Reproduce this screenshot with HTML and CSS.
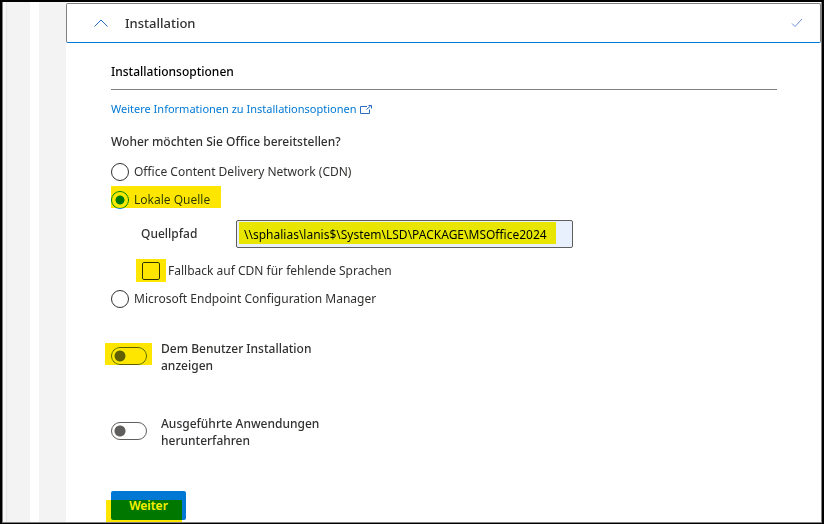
FILE: index.html
```html
<!DOCTYPE html>
<html lang="de">
<head>
    <meta charset="UTF-8">
    <meta name="viewport" content="width=device-width, initial-scale=1.0">
    <title>Installation</title>
    <link rel="stylesheet" href="styles.css">
</head>
<body>
    <div class="frame">
        <div class="rail"></div>
        <div class="gutter"></div>
        <main class="panel">
            <!-- Kopfzeile des aufklappbaren Abschnitts -->
            <button type="button" class="panel-header" aria-expanded="true">
                <svg class="chevron" width="16" height="10" viewBox="0 0 16 10"><path d="M1.5 8.5 8 2l6.500 6.500" /></svg>
                <span class="panel-title">Installation</span>
                <svg class="check" width="12" height="10" viewBox="0 0 12 10"><path d="M1 5.500 4 8.500 11 1" /></svg>
            </button>

            <form class="content">
                <h2>Installationsoptionen</h2>
                <a class="more" href="#">Weitere Informationen zu Installationsoptionen<svg width="12" height="9" viewBox="0 0 12 9"><path d="M7 1.500H.5v7h9V4.500M6.500 4.500 11 .5M8.500.5h3v3" /></svg></a>

                <h3>Woher möchten Sie Office bereitstellen?</h3>
                <label class="option">
                    <input type="radio" name="quelle" value="cdn">
                    Office Content Delivery Network (CDN)
                </label>
                <label class="option mark mark-option">
                    <input type="radio" name="quelle" value="lokal" checked>
                    Lokale Quelle
                </label>

                <div class="path">
                    <label for="pfad">Quellpfad</label>
                    <div class="path-field mark mark-path">
                        <input type="text" id="pfad" value="\\sphalias\lanis$\System\LSD\PACKAGE\MSOffice2024">
                    </div>
                </div>
                <label class="option fallback mark mark-check">
                    <input type="checkbox" name="fallback">
                    Fallback auf CDN für fehlende Sprachen
                </label>

                <label class="option">
                    <input type="radio" name="quelle" value="mecm">
                    Microsoft Endpoint Configuration Manager
                </label>

                <!-- Schalter -->
                <label class="toggle mark mark-toggle">
                    <input type="checkbox" role="switch">
                    <span>Dem Benutzer Installation anzeigen</span>
                </label>
                <label class="toggle">
                    <input type="checkbox" role="switch">
                    <span>Ausgeführte Anwendungen herunterfahren</span>
                </label>

                <div class="actions mark mark-next">
                    <button type="button" class="next">Weiter</button>
                </div>
            </form>
        </main>
    </div>
</body>
</html>
```

FILE: styles.css
```css
* { box-sizing: border-box; }

body {
    display: grid;
    min-height: 100vh;
    margin: 0;
    border: 2px solid #000;
    border-bottom-width: 1px;
    font: 12px/20px "Segoe UI", "Noto Sans", "Open Sans", sans-serif;
    color: #323130;
    background: #fff;
}

input, button { font: inherit; color: inherit; margin: 0; }

/* Rahmen und graue Spalten links */
.frame {
    display: grid;
    grid-template-columns: 27px 9px 27px 1fr;
    border: 1px solid #808080;
    border-top: 0;
}
.rail, .gutter { background: #f3f3f3; }
.rail { box-shadow: inset 3px 0 #f8f8f8, inset 4px 0 #e6e6e6; }
.gutter { grid-column: 3; }
.panel { padding-top: 1px; }

/* Kopfzeile */
.panel-header {
    display: flex;
    align-items: center;
    width: 100%;
    height: 40px;
    padding: 0 17px 0 26px;
    border: 1px solid #808080;
    border-bottom-color: #0078d4;
    border-radius: 2px;
    background: #fff;
    text-align: left;
}
.panel-title { flex: 1; margin-left: 16px; font-size: 13px; font-weight: 500; }
svg { fill: none; stroke: #2b6cc4; }
.check { stroke: #6f8fe0; }

/* Inhalt */
.content { padding: 19px 44px 0 45px; }

h2, h3 { margin: 0; font-size: 12px; font-weight: 500; }
h2 { padding-bottom: 7px; border-bottom: 1px solid #808080; color: #000; }
h3 { margin: 13px 0 6px; }

.more { display: block; margin-top: 9px; font-size: 11px; color: #0078d4; text-decoration: none; }
.more svg { margin-left: 3px; vertical-align: -1px; }

.option { display: flex; align-items: center; gap: 5px; width: fit-content; height: 28px; }
.fallback { margin-left: 31px; gap: 8px; }

/* Auswahlfelder */
.option input {
    appearance: none;
    width: 18px;
    height: 18px;
    border: 1px solid #323130;
    background: #fff;
}
.option input[type="radio"] { border-radius: 50%; }
.option input[type="checkbox"] { border-radius: 2px; }
.option input[type="radio"]:checked {
    border-color: #0078d4;
    background: radial-gradient(circle, #0078d4 4px, #fff 5px);
}

.path { display: flex; align-items: center; margin: 6px 0 9px 30px; }
.path label { width: 95px; font-weight: 500; }
.path-field { flex: 0 1 337px; }
.path-field input {
    display: block;
    width: 100%;
    height: 28px;
    padding: 0 7px;
    border: 1px solid #605e5c;
    border-radius: 2px;
    background: #e8f0fe;
    color: #000;
}

/* Schalter */
.toggle { display: flex; gap: 14px; width: 230px; margin-top: 27px; line-height: 17px; font-weight: 500; }
.toggle + .toggle { margin-top: 41px; }
.toggle input {
    appearance: none;
    flex: none;
    width: 36px;
    height: 18px;
    margin-top: 7px;
    border: 1px solid #605e5c;
    border-radius: 9px;
    background: radial-gradient(circle at 8px 8px, #605e5c 5px, #fff 6px);
}

.actions { width: fit-content; margin-top: 42px; }
.next {
    display: block;
    width: 75px;
    height: 29px;
    padding: 0;
    border: 0;
    border-radius: 2px;
    background: #0078d4;
    color: #fff;
    font-weight: 600;
}

/* Textmarker */
.mark { position: relative; }
.mark::after {
    content: "";
    position: absolute;
    background: #ffe600;
    mix-blend-mode: darken;
    pointer-events: none;
}
.mark-option::after { left: 0; top: 0; width: 110px; height: 22px; }
.mark-path::after { left: 3px; top: 2px; width: 317px; height: 22px; }
.mark-check::after { left: -6px; top: 2px; width: 30px; height: 23px; }
.mark-toggle::after { left: -6px; top: 3px; width: 47px; height: 22px; }
.mark-next::after { left: -5px; top: 9px; width: 76px; height: 22px; }
```
